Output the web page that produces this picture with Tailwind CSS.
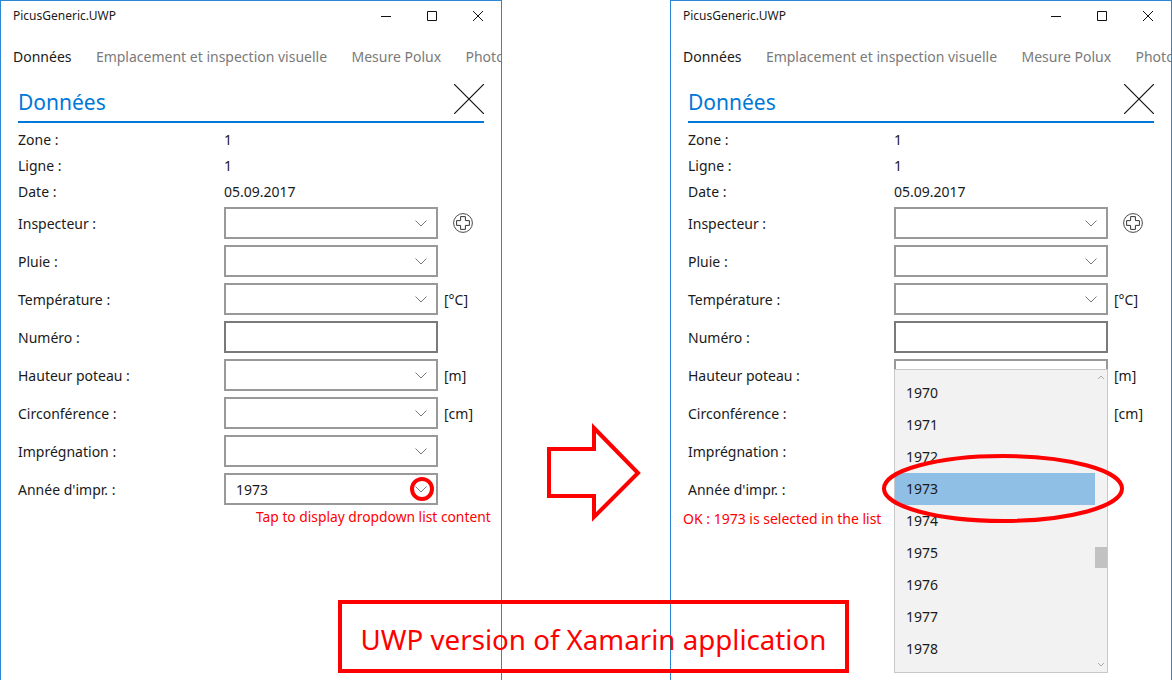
<!DOCTYPE html>
<html lang="en">
<head>
  <meta charset="UTF-8">
  <title>PicusGeneric.UWP</title>
  <script src="https://cdn.jsdelivr.net/npm/@tailwindcss/browser@4"></script>
</head>
<body class="bg-white overflow-hidden font-['Noto_Sans',sans-serif] text-[14px] text-[#1a1a1a]">
  <div class="relative w-[1172px] h-[680px] overflow-hidden">

    <!-- left window -->
    <div class="absolute left-0 top-0 w-[502px] h-[680px] border border-b-0 border-[#2b86d4] bg-white overflow-hidden">
      <div class="flex items-center h-[30px] pl-3 text-[12px]">
        <span>PicusGeneric.UWP</span>
        <div class="ml-auto flex">
          <div class="w-[46px] h-[30px] flex items-center justify-center"><svg width="10" height="10" viewBox="0 0 10 10"><path d="M0 5.5H10" stroke="#111" fill="none"/></svg></div>
          <div class="w-[46px] h-[30px] flex items-center justify-center"><svg width="10" height="10" viewBox="0 0 10 10"><path d="M.5 .5H9.5V9.5H.5Z" stroke="#111" fill="none"/></svg></div>
          <div class="w-[46px] h-[30px] flex items-center justify-center"><svg width="10" height="10" viewBox="0 0 10 10"><path d="M0 0L10 10M10 0L0 10" stroke="#111" fill="none"/></svg></div>
        </div>
      </div>
      <div class="flex gap-[24.4px] pl-3 mt-[13px] h-[24px] items-center whitespace-nowrap text-[#7a7a7a]">
        <span class="text-[#1a1a1a]">Données</span>
        <span>Emplacement et inspection visuelle</span>
        <span>Mesure Polux</span>
        <span>Photos</span>
      </div>
      <div class="mx-[17px] mt-[15px] w-[466px] h-[40px] border-b-2 border-[#0078d7] flex items-center justify-between">
        <span class="text-[21px] text-[#0078d7] mt-[2px]">Données</span>
        <svg class="mt-[-6px]" width="30" height="30" viewBox="0 0 30 30"><path d="M0 0L30 30M30 0L0 30" stroke="#111" stroke-width="1.2" fill="none"/></svg>
      </div>
      <div class="mx-[17px] mt-[3px]">
        <div class="flex items-center h-[26px]"><span class="w-[206px]">Zone :</span><span>1</span></div>
        <div class="flex items-center h-[26px]"><span class="w-[206px]">Ligne :</span><span>1</span></div>
        <div class="flex items-center h-[26px]"><span class="w-[206px]">Date :</span><span>05.09.2017</span></div>
        <div class="flex flex-col gap-[6px] mt-[3px]">
          <div class="flex items-center h-[32px]"><span class="w-[206px]">Inspecteur :</span>
            <div class="w-[214px] h-[32px] border-2 border-[#999] flex items-center justify-end pr-[9px]"><svg width="12" height="7" viewBox="0 0 12 7"><path d="M.5 .5L6 6L11.5 .5" stroke="#777" fill="none"/></svg></div>
            <svg class="ml-[15px]" width="20" height="20" viewBox="0 0 20 20"><circle cx="10" cy="10" r="9.4" stroke="#333" stroke-width="0.9" fill="none"/><path d="M7.6 3.6H12.4V7.6H16.4V12.4H12.4V16.4H7.6V12.4H3.6V7.6H7.6Z" stroke="#333" stroke-width="1" fill="none"/></svg>
          </div>
          <div class="flex items-center h-[32px]"><span class="w-[206px]">Pluie :</span>
            <div class="w-[214px] h-[32px] border-2 border-[#999] flex items-center justify-end pr-[9px]"><svg width="12" height="7" viewBox="0 0 12 7"><path d="M.5 .5L6 6L11.5 .5" stroke="#777" fill="none"/></svg></div>
          </div>
          <div class="flex items-center h-[32px]"><span class="w-[206px]">Température :</span>
            <div class="w-[214px] h-[32px] border-2 border-[#999] flex items-center justify-end pr-[9px]"><svg width="12" height="7" viewBox="0 0 12 7"><path d="M.5 .5L6 6L11.5 .5" stroke="#777" fill="none"/></svg></div>
            <span class="ml-[6px]">[°C]</span>
          </div>
          <div class="flex items-center h-[32px]"><span class="w-[206px]">Numéro :</span>
            <div class="w-[214px] h-[32px] border-2 border-[#7a7a7a]"></div>
          </div>
          <div class="flex items-center h-[32px]"><span class="w-[206px]">Hauteur poteau :</span>
            <div class="w-[214px] h-[32px] border-2 border-[#999] flex items-center justify-end pr-[9px]"><svg width="12" height="7" viewBox="0 0 12 7"><path d="M.5 .5L6 6L11.5 .5" stroke="#777" fill="none"/></svg></div>
            <span class="ml-[6px]">[m]</span>
          </div>
          <div class="flex items-center h-[32px]"><span class="w-[206px]">Circonférence :</span>
            <div class="w-[214px] h-[32px] border-2 border-[#999] flex items-center justify-end pr-[9px]"><svg width="12" height="7" viewBox="0 0 12 7"><path d="M.5 .5L6 6L11.5 .5" stroke="#777" fill="none"/></svg></div>
            <span class="ml-[6px]">[cm]</span>
          </div>
          <div class="flex items-center h-[32px]"><span class="w-[206px]">Imprégnation :</span>
            <div class="w-[214px] h-[32px] border-2 border-[#999] flex items-center justify-end pr-[9px]"><svg width="12" height="7" viewBox="0 0 12 7"><path d="M.5 .5L6 6L11.5 .5" stroke="#777" fill="none"/></svg></div>
          </div>
          <div class="flex items-center h-[32px]"><span class="w-[206px]">Année d'impr. :</span>
            <div class="w-[214px] h-[32px] border-2 border-[#999] flex items-center justify-between pl-[10px] pr-[9px]"><span>1973</span><svg width="12" height="7" viewBox="0 0 12 7"><path d="M.5 .5L6 6L11.5 .5" stroke="#777" fill="none"/></svg></div>
          </div>
        </div>
      </div>
    </div>

    <!-- right window -->
    <div class="absolute left-[670px] top-0 w-[502px] h-[680px] border border-b-0 border-[#2b86d4] bg-white overflow-hidden">
      <div class="flex items-center h-[30px] pl-3 text-[12px]">
        <span>PicusGeneric.UWP</span>
        <div class="ml-auto flex">
          <div class="w-[46px] h-[30px] flex items-center justify-center"><svg width="10" height="10" viewBox="0 0 10 10"><path d="M0 5.5H10" stroke="#111" fill="none"/></svg></div>
          <div class="w-[46px] h-[30px] flex items-center justify-center"><svg width="10" height="10" viewBox="0 0 10 10"><path d="M.5 .5H9.5V9.5H.5Z" stroke="#111" fill="none"/></svg></div>
          <div class="w-[46px] h-[30px] flex items-center justify-center"><svg width="10" height="10" viewBox="0 0 10 10"><path d="M0 0L10 10M10 0L0 10" stroke="#111" fill="none"/></svg></div>
        </div>
      </div>
      <div class="flex gap-[24.4px] pl-3 mt-[13px] h-[24px] items-center whitespace-nowrap text-[#7a7a7a]">
        <span class="text-[#1a1a1a]">Données</span>
        <span>Emplacement et inspection visuelle</span>
        <span>Mesure Polux</span>
        <span>Photos</span>
      </div>
      <div class="mx-[17px] mt-[15px] w-[466px] h-[40px] border-b-2 border-[#0078d7] flex items-center justify-between">
        <span class="text-[21px] text-[#0078d7] mt-[2px]">Données</span>
        <svg class="mt-[-6px]" width="30" height="30" viewBox="0 0 30 30"><path d="M0 0L30 30M30 0L0 30" stroke="#111" stroke-width="1.2" fill="none"/></svg>
      </div>
      <div class="mx-[17px] mt-[3px]">
        <div class="flex items-center h-[26px]"><span class="w-[206px]">Zone :</span><span>1</span></div>
        <div class="flex items-center h-[26px]"><span class="w-[206px]">Ligne :</span><span>1</span></div>
        <div class="flex items-center h-[26px]"><span class="w-[206px]">Date :</span><span>05.09.2017</span></div>
        <div class="flex flex-col gap-[6px] mt-[3px]">
          <div class="flex items-center h-[32px]"><span class="w-[206px]">Inspecteur :</span>
            <div class="w-[214px] h-[32px] border-2 border-[#999] flex items-center justify-end pr-[9px]"><svg width="12" height="7" viewBox="0 0 12 7"><path d="M.5 .5L6 6L11.5 .5" stroke="#777" fill="none"/></svg></div>
            <svg class="ml-[15px]" width="20" height="20" viewBox="0 0 20 20"><circle cx="10" cy="10" r="9.4" stroke="#333" stroke-width="0.9" fill="none"/><path d="M7.6 3.6H12.4V7.6H16.4V12.4H12.4V16.4H7.6V12.4H3.6V7.6H7.6Z" stroke="#333" stroke-width="1" fill="none"/></svg>
          </div>
          <div class="flex items-center h-[32px]"><span class="w-[206px]">Pluie :</span>
            <div class="w-[214px] h-[32px] border-2 border-[#999] flex items-center justify-end pr-[9px]"><svg width="12" height="7" viewBox="0 0 12 7"><path d="M.5 .5L6 6L11.5 .5" stroke="#777" fill="none"/></svg></div>
          </div>
          <div class="flex items-center h-[32px]"><span class="w-[206px]">Température :</span>
            <div class="w-[214px] h-[32px] border-2 border-[#999] flex items-center justify-end pr-[9px]"><svg width="12" height="7" viewBox="0 0 12 7"><path d="M.5 .5L6 6L11.5 .5" stroke="#777" fill="none"/></svg></div>
            <span class="ml-[6px]">[°C]</span>
          </div>
          <div class="flex items-center h-[32px]"><span class="w-[206px]">Numéro :</span>
            <div class="w-[214px] h-[32px] border-2 border-[#7a7a7a]"></div>
          </div>
          <div class="flex items-center h-[32px]"><span class="w-[206px]">Hauteur poteau :</span>
            <div class="w-[214px] h-[32px] border-2 border-[#999]"></div>
            <span class="ml-[6px]">[m]</span>
          </div>
          <div class="flex items-center h-[32px]"><span class="w-[206px]">Circonférence :</span>
            <div class="w-[214px] h-[32px]"></div>
            <span class="ml-[6px]">[cm]</span>
          </div>
          <div class="flex items-center h-[32px]"><span class="w-[206px]">Imprégnation :</span></div>
          <div class="flex items-center h-[32px]"><span class="w-[206px]">Année d'impr. :</span></div>
        </div>
      </div>
    </div>

    <!-- dropdown list, over the right window -->
    <div class="absolute left-[894px] top-[369px] w-[214px] h-[304px] bg-[#f2f2f2] border border-[#c8c8c8] pl-[11px] pt-[7px]">
      <div class="h-[32px] pb-[2px] flex items-center">1970</div>
      <div class="h-[32px] pb-[2px] flex items-center">1971</div>
      <div class="h-[32px] pb-[2px] flex items-center">1972</div>
      <div class="h-[32px] pb-[2px] flex items-center bg-[#90bfe6] ml-[-11px] pl-[11px] w-[200px]">1973</div>
      <div class="h-[32px] pb-[2px] flex items-center">1974</div>
      <div class="h-[32px] pb-[2px] flex items-center">1975</div>
      <div class="h-[32px] pb-[2px] flex items-center">1976</div>
      <div class="h-[32px] pb-[2px] flex items-center">1977</div>
      <div class="h-[32px] pb-[2px] flex items-center">1978</div>
      <div class="absolute right-0 top-[177px] w-[12px] h-[21px] bg-[#c2c2c2]"></div>
      <svg class="absolute right-[2px] top-[5px]" width="8" height="5" viewBox="0 0 8 5"><path d="M1 4L4 1L7 4" stroke="#aaa" fill="none"/></svg>
      <svg class="absolute right-[2px] bottom-[5px]" width="8" height="5" viewBox="0 0 8 5"><path d="M1 1L4 4L7 1" stroke="#aaa" fill="none"/></svg>
    </div>

    <!-- annotations -->
    <svg class="absolute left-[410px] top-[477px]" width="24" height="24" viewBox="0 0 24 24"><circle cx="12" cy="12" r="10" stroke="#f00" stroke-width="4" fill="none"/></svg>
    <span class="absolute left-[256px] top-[507px] text-[13.8px] text-[#f00] whitespace-nowrap">Tap to display dropdown list content</span>
    <span class="absolute left-[683px] top-[508px] text-[14px] text-[#f00] whitespace-nowrap">OK : 1973 is selected in the list</span>
    <svg class="absolute left-[880px] top-[452px]" width="246" height="74" viewBox="0 0 246 74"><ellipse cx="123" cy="36.5" rx="119" ry="32.5" stroke="#f00" stroke-width="4" fill="none"/></svg>
    <svg class="absolute left-[546px] top-[422px]" width="96" height="100" viewBox="0 0 96 100"><path d="M3 27H48V6L92 51L48 95V74H3Z" stroke="#f00" stroke-width="4" fill="#fff"/></svg>
    <div class="absolute left-[338px] top-[600px] w-[511px] h-[73px] border-4 border-[#f00] flex items-center justify-center pt-[6px] text-[#f00] text-[27.7px] whitespace-nowrap">UWP version of Xamarin application</div>
  </div>
</body>
</html>
